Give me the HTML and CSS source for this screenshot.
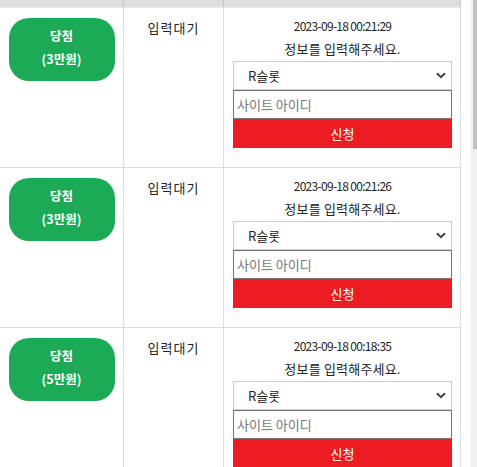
FILE: index.html
```html
<html>
	<head>
		<meta charset="utf-8">
		<link rel="stylesheet" href="styles.css">
	</head>
	<body>
		<div class="page">
			<div class="board">
				<div class="row head">
					<div class="cell"></div>
					<div class="cell"></div>
					<div class="cell"></div>
				</div>

				<div class="row">
					<div class="cell prize">
						<div class="badge">당첨<br>(3만원)</div>
					</div>
					<div class="cell state">입력대기</div>
					<div class="cell apply">
						<div class="date">2023-09-18 00:21:29</div>
						<div class="msg">정보를 입력해주세요.</div>
						<div class="pick">
							<select class="game"><option>R슬롯</option></select>
							<svg class="chev" width="10" height="7" viewBox="0 0 10 7"><path d="M1 1.2 L5 5.2 L9 1.2" fill="none" stroke="#444" stroke-width="2"/></svg>
						</div>
						<input class="site" type="text" placeholder="사이트 아이디">
						<button class="send">신청</button>
					</div>
				</div>

				<div class="row">
					<div class="cell prize">
						<div class="badge">당첨<br>(3만원)</div>
					</div>
					<div class="cell state">입력대기</div>
					<div class="cell apply">
						<div class="date">2023-09-18 00:21:26</div>
						<div class="msg">정보를 입력해주세요.</div>
						<div class="pick">
							<select class="game"><option>R슬롯</option></select>
							<svg class="chev" width="10" height="7" viewBox="0 0 10 7"><path d="M1 1.2 L5 5.2 L9 1.2" fill="none" stroke="#444" stroke-width="2"/></svg>
						</div>
						<input class="site" type="text" placeholder="사이트 아이디">
						<button class="send">신청</button>
					</div>
				</div>

				<div class="row">
					<div class="cell prize">
						<div class="badge">당첨<br>(5만원)</div>
					</div>
					<div class="cell state">입력대기</div>
					<div class="cell apply">
						<div class="date">2023-09-18 00:18:35</div>
						<div class="msg">정보를 입력해주세요.</div>
						<div class="pick">
							<select class="game"><option>R슬롯</option></select>
							<svg class="chev" width="10" height="7" viewBox="0 0 10 7"><path d="M1 1.2 L5 5.2 L9 1.2" fill="none" stroke="#444" stroke-width="2"/></svg>
						</div>
						<input class="site" type="text" placeholder="사이트 아이디">
						<button class="send">신청</button>
					</div>
				</div>
			</div>

			<div class="track"><div class="thumb"></div></div>
		</div>
	</body>
</html>
```

FILE: styles.css
```css
body {
	margin: 0;
	padding: 0;
	overflow: hidden;
	background: white;
	font-family: "Noto Sans CJK KR", "Noto Sans", sans-serif;
	color: #222;
}

.page {
	display: flex;
	height: 467px;
	overflow: hidden;
}

.board {
	width: 461px;
	flex: none;
}

.row {
	display: grid;
	grid-template-columns: 124px 100px 237px;
	height: 159px;
	border-bottom: 1px solid #dddddd;
}

.cell {
	border-right: 1px solid #dddddd;
	text-align: center;
}

.row.head {
	height: 7px;
	background: #dddddd;
	border-bottom: 1px solid #e6eaee;
}

.row.head .cell {
	border-right-color: #c4c4c4;
}

.prize {
	padding-top: 10px;
	display: flex;
	justify-content: center;
	align-items: flex-start;
}

.badge {
	width: 106px;
	height: 63px;
	box-sizing: border-box;
	padding-top: 6px;
	border-radius: 20px;
	background: #1caa56;
	color: white;
	font-weight: bold;
	font-size: 12.5px;
	line-height: 23px;
}

.state {
	padding-top: 10px;
	font-size: 13px;
	line-height: 20px;
	letter-spacing: 1px;
}

.apply {
	padding: 8px 8px 0 9px;
	box-sizing: border-box;
}

.date {
	font-size: 12px;
	line-height: 20px;
	letter-spacing: -0.7px;
}

.msg {
	font-size: 13px;
	line-height: 25px;
	letter-spacing: 0.2px;
}

.pick {
	position: relative;
}

.game {
	-webkit-appearance: none;
	appearance: none;
	display: block;
	width: 219px;
	height: 29px;
	margin: 0;
	padding: 0 0 0 14px;
	border: 1px solid #cccccc;
	border-radius: 0;
	background: white;
	font-family: inherit;
	font-size: 13px;
	color: #222;
}

.chev {
	position: absolute;
	right: 6px;
	top: 11px;
	pointer-events: none;
}

.site {
	display: block;
	width: 219px;
	height: 29px;
	box-sizing: border-box;
	margin: 0;
	padding: 0 3px;
	border: 1px solid #767676;
	border-radius: 0;
	font-family: inherit;
	font-size: 13px;
	outline: none;
}

.site::placeholder {
	color: #777777;
}

.send {
	display: block;
	width: 219px;
	height: 29px;
	margin: 0;
	border: none;
	border-radius: 0;
	background: #ed1c24;
	color: white;
	font-family: inherit;
	font-size: 13px;
	cursor: pointer;
}

.track {
	margin-left: 10px;
	width: 6px;
	flex: none;
	background: #f1f1f1;
}

.thumb {
	margin-left: 2px;
	height: 149px;
	background: #c1c1c1;
}
```
